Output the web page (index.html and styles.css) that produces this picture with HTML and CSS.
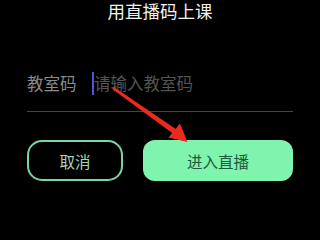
FILE: index.html
```html
<!DOCTYPE html>
<html lang="zh">
<head>
<meta charset="utf-8">
<link rel="stylesheet" href="styles.css">
</head>
<body>
<div class="dialog">
  <div class="title">用直播码上课</div>
  <div class="field">
    <span class="label">教室码</span>
    <span class="cursor"></span>
    <span class="placeholder">请输入教室码</span>
  </div>
  <div class="divider"></div>
  <div class="actions">
    <button class="btn btn-cancel">取消</button>
    <button class="btn btn-enter">进入直播</button>
  </div>
</div>
<svg class="arrow" width="310" height="200" viewBox="0 0 310 200">
  <polygon points="112.2,89 114,87 176.5,129.5 173.5,134" fill="#ea2a1f"/>
  <polygon points="187.5,142 168.5,137.5 180,123.5" fill="#ea2a1f"/>
</svg>
</body>
</html>
```
FILE: styles.css
```css
html, body {
  margin: 0;
  padding: 0;
  background: #000;
  width: 310px;
  height: 200px;
  overflow: hidden;
}
body {
  position: relative;
  font-family: "Noto Sans CJK SC", "Noto Sans", sans-serif;
}
.dialog {
  padding: 0 17px 0 27px;
  display: flex;
  flex-direction: column;
}
.title {
  color: #f2f2f2;
  font-size: 17.5px;
  line-height: 21px;
  padding-top: 0;
  text-align: center;
}
.field {
  display: flex;
  align-items: center;
  height: 24px;
  margin-top: 50px;
}
.label {
  color: #8a8a8a;
  font-size: 16.5px;
  line-height: 24px;
  width: 65px;
}
.cursor {
  width: 2px;
  height: 23px;
  background: #4a58d8;
}
.placeholder {
  color: #545454;
  font-size: 16.5px;
  line-height: 24px;
}
.divider {
  height: 1px;
  background: #444;
  margin-top: 16px;
}
.actions {
  display: flex;
  gap: 20px;
  margin-top: 28px;
}
.btn {
  font-family: inherit;
  height: 41px;
  font-size: 15.5px;
  padding: 0;
  display: flex;
  align-items: center;
  justify-content: center;
}
.btn-cancel {
  width: 96px;
  background: #000;
  border: 2px solid #78d6a6;
  border-radius: 15px;
  color: #a8d4bc;
}
.btn-enter {
  flex: 1;
  background: #7ef4ae;
  border: none;
  border-radius: 12px;
  color: #1f5a3a;
}
.arrow {
  position: absolute;
  left: 0;
  top: 0;
}
```
